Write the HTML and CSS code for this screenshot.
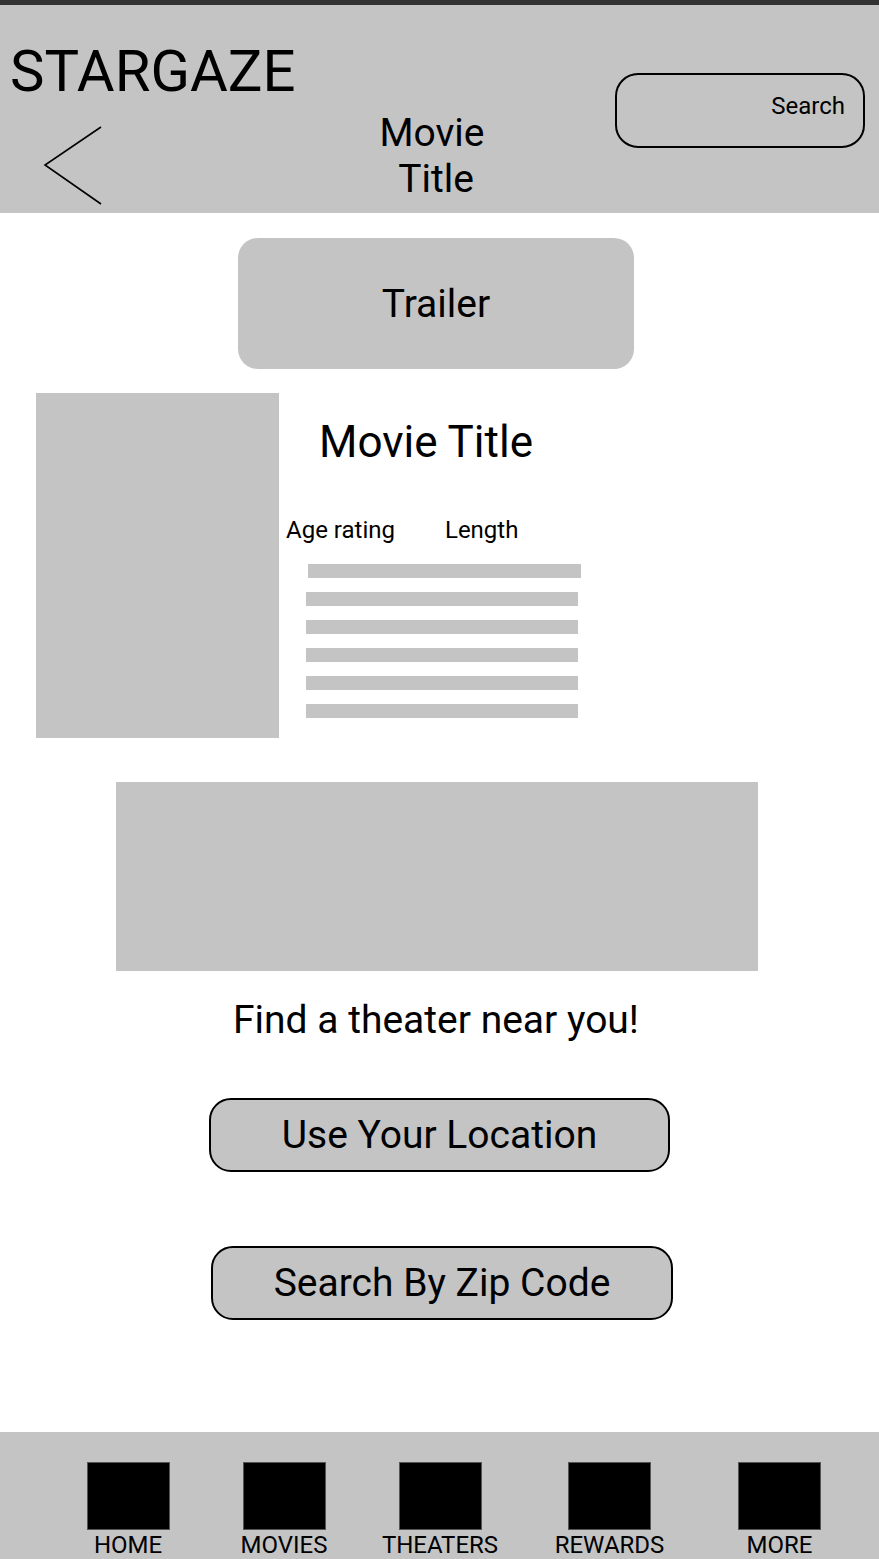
FILE: index.html
```html
<!DOCTYPE html>
<html lang="en">
<head>
<meta charset="utf-8">
<title>Stargaze - Movie</title>
<link rel="stylesheet" href="styles.css">
</head>
<body>
<div class="page">
  <div class="topbar"></div>
  <header class="header">
    <div class="brand-col">
      <div class="brand">STARGAZE</div>
      <svg class="back" width="62" height="82" viewBox="0 0 62 82" aria-label="Back">
        <polyline points="58,2 2,40 58,79" fill="none" stroke="#000" stroke-width="1.6"/>
      </svg>
    </div>
    <div class="title-col">
      <div class="head-title"><span class="l1">Movie</span><span class="l2">Title</span></div>
    </div>
    <div class="search">Search</div>
  </header>

  <main class="main">
    <div class="trailer">Trailer</div>

    <section class="info">
      <div class="poster"></div>
      <div class="details">
        <h1 class="movie-title">Movie Title</h1>
        <div class="meta">
          <span class="age">Age rating</span>
          <span class="length">Length</span>
        </div>
        <div class="desc">
          <div class="bar bar-first"></div>
          <div class="bar"></div>
          <div class="bar"></div>
          <div class="bar"></div>
          <div class="bar"></div>
          <div class="bar"></div>
        </div>
      </div>
    </section>

    <div class="map"></div>

    <p class="find">Find a theater near you!</p>

    <div class="btn btn-loc">Use Your Location</div>
    <div class="btn btn-zip">Search By Zip Code</div>
  </main>

  <nav class="nav">
    <div class="nav-item"><div class="nav-icon"></div><span>HOME</span></div>
    <div class="nav-item"><div class="nav-icon"></div><span>MOVIES</span></div>
    <div class="nav-item"><div class="nav-icon"></div><span>THEATERS</span></div>
    <div class="nav-item"><div class="nav-icon"></div><span>REWARDS</span></div>
    <div class="nav-item"><div class="nav-icon"></div><span>MORE</span></div>
  </nav>
</div>
</body>
</html>
```

FILE: styles.css
```css
* { box-sizing: border-box; }

html, body {
  margin: 0;
  padding: 0;
  background: #fff;
}

body {
  font-family: Roboto, "Noto Sans", "Liberation Sans", sans-serif;
  color: #000;
}

.page {
  width: 879px;
  height: 1559px;
  display: flex;
  flex-direction: column;
  overflow: hidden;
}

.topbar {
  height: 5px;
  background: #333333;
  flex: none;
}

.header {
  height: 208px;
  background: #c4c4c4;
  display: flex;
  flex: none;
}

.brand-col {
  width: 330px;
  display: flex;
  flex-direction: column;
}

.brand {
  font-size: 58px;
  line-height: 58px;
  margin-top: 37px;
  margin-left: 10px;
}

.back {
  display: block;
  margin-top: 25px;
  margin-left: 43px;
}

.title-col {
  width: 204px;
  text-align: center;
}

.head-title {
  font-size: 39px;
  line-height: 46px;
  margin-top: 105px;
  display: flex;
  flex-direction: column;
  align-items: center;
}

.head-title .l2 {
  padding-left: 8px;
}

.search {
  margin-left: auto;
  margin-right: 14px;
  margin-top: 68px;
  width: 250px;
  height: 75px;
  border: 2px solid #000;
  border-radius: 23px;
  font-size: 24px;
  line-height: 28px;
  text-align: right;
  padding: 17px 18px 0 0;
}

.main {
  display: flex;
  flex-direction: column;
  flex: 1;
}

.trailer {
  margin-top: 25px;
  margin-left: 238px;
  width: 396px;
  height: 131px;
  background: #c4c4c4;
  border-radius: 20px;
  display: flex;
  align-items: center;
  justify-content: center;
  font-size: 39px;
}

.info {
  display: flex;
  margin-top: 24px;
  padding-left: 36px;
}

.poster {
  width: 243px;
  height: 345px;
  background: #c4c4c4;
  flex: none;
}

.details {
  margin-left: 7px;
  display: flex;
  flex-direction: column;
}

.movie-title {
  font-weight: 400;
  font-size: 44px;
  line-height: 50px;
  margin: 24px 0 0 33px;
}

.meta {
  display: flex;
  font-size: 24px;
  line-height: 28px;
  margin-top: 49px;
}

.length {
  margin-left: 50px;
}

.desc {
  display: flex;
  flex-direction: column;
  gap: 14px;
  margin-top: 20px;
  padding-left: 20px;
}

.bar {
  width: 272px;
  height: 14px;
  background: #c4c4c4;
}

.bar-first {
  margin-left: 2px;
  width: 273px;
}

.map {
  margin-top: 44px;
  margin-left: 116px;
  width: 642px;
  height: 189px;
  background: #c4c4c4;
}

.find {
  margin: 27px 0 0 0;
  font-size: 39px;
  line-height: 45px;
  text-align: center;
  padding-right: 7px;
}

.btn {
  height: 74px;
  border: 2px solid #000;
  border-radius: 22px;
  background: #c4c4c4;
  display: flex;
  align-items: center;
  justify-content: center;
  font-size: 39px;
}

.btn-loc {
  margin-top: 55px;
  margin-left: 209px;
  width: 461px;
}

.btn-zip {
  margin-top: 74px;
  margin-left: 211px;
  width: 462px;
}

.nav {
  flex: none;
  height: 127px;
  background: #c4c4c4;
  display: grid;
  grid-template-columns: 156px 156px 156px 183px 157px;
  padding: 30px 0 0 50px;
}

.nav-item {
  display: flex;
  flex-direction: column;
  align-items: center;
}

.nav-icon {
  width: 83px;
  height: 68px;
  background: #000;
  border: 1px solid #555;
}

.nav-item span {
  font-size: 24px;
  line-height: 28px;
  margin-top: 1px;
}
```
